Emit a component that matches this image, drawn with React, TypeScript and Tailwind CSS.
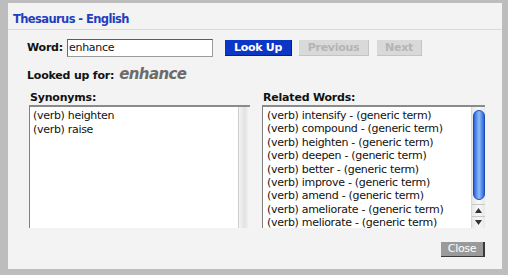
import React from "react";

const font = { fontFamily: '"DejaVu Sans", Verdana, sans-serif' };

const related = [
  "intensify",
  "compound",
  "heighten",
  "deepen",
  "better",
  "improve",
  "amend",
  "ameliorate",
  "meliorate",
];

export default function App() {
  return (
    <div className="w-[512px] h-[280px] bg-white" style={font}>
      <div className="w-[508px] h-[275px] border-l-[8px] border-t-[3px] border-r-[6px] border-b-[6px] border-[#bdbdbd] bg-[#f3f3f3] flex flex-col">
        <div className="h-[27px] border-b border-[#dadada] pl-[5px] pt-[9px] text-[11.5px] leading-[14px] font-bold text-[#1f3fbf] tracking-[-0.6px]">
          Thesaurus - English
        </div>
        <div className="flex items-center h-[18px] mt-[9px] pl-[19px]">
          <span className="text-[11px] font-bold text-[#111] tracking-[-0.2px] w-[40px]">Word:</span>
          <div className="w-[146px] h-[18px] bg-white border border-[#9a9a9a] border-t-[#5a5a5a] border-l-[#6a6a6a] text-[11px] leading-[16px] pl-[1px] text-[#111] tracking-[-0.3px]">
            enhance
          </div>
          <div className="ml-[12px] w-[67px] h-[16px] bg-[#0c36c6] border-r border-b border-[#0a2170] text-white text-[11px] font-bold leading-[15px] text-center tracking-[-0.3px]">
            Look Up
          </div>
          <div className="ml-[7px] w-[70px] h-[16px] bg-[#d9d9d9] border-r border-b border-[#c4c4c4] text-[#b4b4b4] text-[11px] font-bold leading-[15px] text-center tracking-[-0.3px]">
            Previous
          </div>
          <div className="ml-[8px] w-[45px] h-[16px] bg-[#d9d9d9] border-r border-b border-[#c4c4c4] text-[#b4b4b4] text-[11px] font-bold leading-[15px] text-center tracking-[-0.3px]">
            Next
          </div>
        </div>
        <div className="flex items-baseline mt-[6px] pl-[19px] h-[19px]">
          <span className="text-[11px] font-bold text-[#111] tracking-[-0.2px]">Looked up for:</span>
          <span className="ml-[5px] text-[15px] font-bold italic text-[#6b6b6b] tracking-[-0.6px]">enhance</span>
        </div>
        <div className="flex mt-[9px] pl-[21px]">
          <div className="w-[221px] flex flex-col">
            <div className="text-[11px] font-bold text-[#111] leading-[14px] h-[14px] pl-[1px] tracking-[-0.2px]">Synonyms:</div>
            <div className="h-[123px] flex bg-white border-t-2 border-l border-[#808080] border-t-[#8a8a8a]">
              <div className="flex-1 pl-[3px] pt-[2px] text-[11px] leading-[13.5px] text-[#111] tracking-[-0.3px]">
                <div>(verb) heighten</div>
                <div>(verb) raise</div>
              </div>
              <div className="w-[12px] border-l border-[#cfcfcf] bg-gradient-to-r from-[#f4f4f4] via-[#e2e2e2] to-[#f8f8f8]" />
            </div>
          </div>
          <div className="w-[223px] ml-[12px] flex flex-col">
            <div className="text-[11px] font-bold text-[#111] leading-[14px] h-[14px] pl-[1px] tracking-[-0.2px]">Related Words:</div>
            <div className="h-[123px] flex bg-white border-t-2 border-l border-[#808080] border-t-[#8a8a8a]">
              <div className="flex-1 pl-[4px] pt-[2px] text-[11px] leading-[13.4px] text-[#111] tracking-[-0.3px]">
                {related.map((w) => (
                  <div key={w}>(verb) {w} - (generic term)</div>
                ))}
              </div>
              <div className="w-[14px] flex flex-col items-center bg-gradient-to-r from-[#e8e8e8] via-[#f8f8f8] to-[#e8e8e8] border-l border-[#d8d8d8]">
                <div className="mt-[3px] w-[12px] h-[90px] rounded-full bg-gradient-to-r from-[#2a63d8] via-[#8fbdf7] to-[#2a63d8] border border-[#1b4cb8]" />
                <div className="flex-1" />
                <div className="w-[13px] h-[12px] flex items-center justify-center border-t border-[#c8c8c8]">
                  <svg width="7" height="5" viewBox="0 0 7 5"><path d="M3.5 0 L7 5 L0 5 Z" fill="#333" /></svg>
                </div>
                <div className="w-[13px] h-[12px] flex items-center justify-center border-t border-[#c8c8c8]">
                  <svg width="7" height="5" viewBox="0 0 7 5"><path d="M0 0 L7 0 L3.5 5 Z" fill="#333" /></svg>
                </div>
              </div>
            </div>
          </div>
        </div>
        <div className="flex justify-end pr-[17px] mt-[14px]">
          <div className="w-[44px] h-[15px] bg-[#9a9a9a] border-r-2 border-b border-[#3a3a3a] text-white text-[11px] leading-[14px] text-center tracking-[-0.3px]">
            Close
          </div>
        </div>
      </div>
    </div>
  );
}
